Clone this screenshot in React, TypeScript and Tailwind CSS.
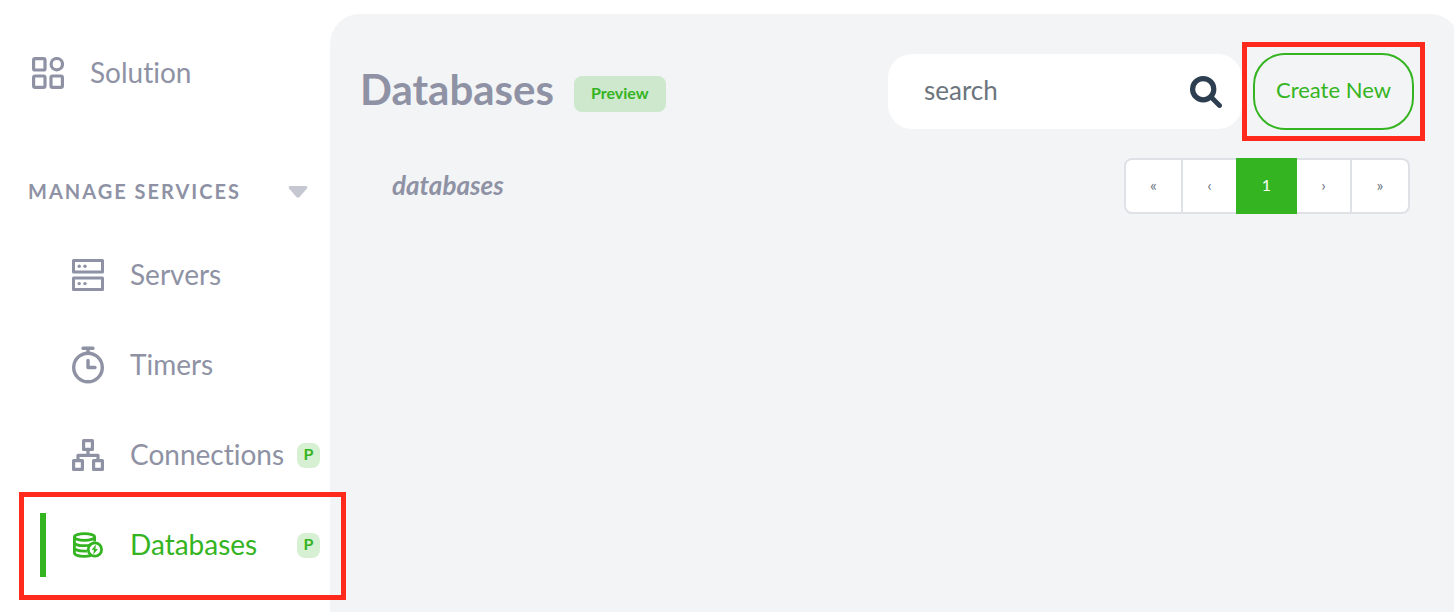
import type { ReactNode } from "react";

function SolutionIcon() {
  return (
    <svg viewBox="0 0 32 32" className="size-8" fill="none" stroke="currentColor" strokeWidth="3.2" aria-hidden="true">
      <rect x="1.6" y="1.6" width="11.4" height="11.4" rx="1.6" />
      <circle cx="24.8" cy="7.2" r="5.7" />
      <rect x="1.6" y="19" width="11.4" height="11.4" rx="1.6" />
      <rect x="19" y="19" width="11.4" height="11.4" rx="1.6" />
    </svg>
  );
}

function ServersIcon() {
  return (
    <svg viewBox="0 0 32 32" className="size-8" fill="none" stroke="currentColor" strokeWidth="3" strokeLinejoin="round" aria-hidden="true">
      <rect x="1.5" y="1.5" width="29" height="11.6" />
      <rect x="1.5" y="18.9" width="29" height="11.6" />
      <g fill="currentColor" stroke="none">
        <circle cx="7.2" cy="7.2" r="1.7" />
        <circle cx="13" cy="7.2" r="1.7" />
        <circle cx="7.2" cy="24.6" r="1.7" />
        <circle cx="13" cy="24.6" r="1.7" />
      </g>
    </svg>
  );
}

function TimersIcon() {
  return (
    <svg viewBox="0 0 32 38" className="h-[38px] w-8" fill="none" stroke="currentColor" strokeWidth="3.4" aria-hidden="true">
      <circle cx="16" cy="21.5" r="14.3" />
      <path d="M11 2.2h10M16 2.2v5M16 14.5v7h7" strokeLinecap="round" strokeLinejoin="round" />
    </svg>
  );
}

function ConnectionsIcon() {
  return (
    <svg viewBox="0 0 32 32" className="size-8" fill="none" stroke="currentColor" strokeWidth="3.2" strokeLinejoin="round" aria-hidden="true">
      <rect x="11.6" y="1.6" width="8.8" height="8.8" />
      <rect x="1.6" y="21.6" width="8.8" height="8.8" />
      <rect x="21.6" y="21.6" width="8.8" height="8.8" />
      <path d="M16 10.5v6M6 21.5v-5.2h20v5.2" />
    </svg>
  );
}

function DatabasesIcon() {
  return (
    <svg viewBox="0 0 32 32" className="size-8" fill="none" stroke="currentColor" strokeWidth="2.8" aria-hidden="true">
      <ellipse cx="12.5" cy="8" rx="10.1" ry="3.4" />
      <path d="M2.4 8v16c0 2 4.5 3.3 10.1 3.3 2.4 0 4.5-.3 6.2-.7M22.6 8v4.5" />
      <path d="M2.4 13.4c0 2 4.5 3.3 10.1 3.3 2.4 0 4.6-.3 6.4-1M2.4 18.8c0 2 4.5 3.3 10.1 3.3h2.4" />
      <circle cx="22.9" cy="20.5" r="6.7" />
      <path d="M24 15.6l-4.4 5.2h2.3l-.6 4.6 4.6-5.4h-2.5z" fill="currentColor" stroke="none" />
    </svg>
  );
}

function Highlight({ className }: { className: string }) {
  return <span className={`pointer-events-none absolute z-10 border-[5px] border-[#ff2a1c] ${className}`} />;
}

type ItemProps = { label: string; icon: ReactNode; preview?: boolean; active?: boolean };

function NavItem({ label, icon, preview, active }: ItemProps) {
  return (
    <li className="relative flex h-[90px] items-center pr-2.5 pl-10">
      <a
        href="#"
        aria-current={active ? "page" : undefined}
        className={`flex h-16 flex-1 items-center border-l-[6px] pl-[26px] ${
          active ? "border-[#35b422] text-[#35b422]" : "border-transparent"
        }`}
      >
        <span className="flex w-8 shrink-0 justify-center">{icon}</span>
        <span className="ml-[26px] pb-0.5">{label}</span>
        {preview && (
          <span className="ml-auto flex h-[25px] w-[23px] items-center justify-center rounded-lg bg-[#d7f0d3] pb-0.5 text-base font-bold text-[#35b422]">
            P
          </span>
        )}
      </a>
      {active && <Highlight className="-top-2 -right-4 -bottom-2.5 left-[19px]" />}
    </li>
  );
}

const pageCell =
  "flex h-14 items-center justify-center border-2 border-[#dee2e6] bg-white pb-0.5 text-base text-[#6c757d]";

export default function App() {
  return (
    <div className="flex h-screen overflow-hidden bg-white font-['Lato','Liberation_Sans',sans-serif] text-[#8e92a4] [font-variant-ligatures:none]">
      <nav aria-label="Main" className="w-[330px] shrink-0 pt-7 text-[28px] leading-9">
        <a href="#" className="flex h-[90px] items-center pl-8">
          <SolutionIcon />
          <span className="ml-[26px] pb-0.5">Solution</span>
        </a>
        <button
          type="button"
          aria-expanded="true"
          className="mt-9 flex h-19 w-full items-center justify-between pr-[22px] pl-7 text-xl font-bold tracking-widest"
        >
          <span className="pb-0.5">MANAGE SERVICES</span>
          <svg viewBox="0 0 20 12" className="h-3 w-5" fill="#c5c8d0" aria-hidden="true">
            <path d="M2 0h16q2 .6 1 2.4L11.6 11q-1.6 1.4-3.2 0L1 2.4Q0 .6 2 0z" />
          </svg>
        </button>
        <ul>
          <NavItem label="Servers" icon={<ServersIcon />} />
          <NavItem label="Timers" icon={<TimersIcon />} />
          <NavItem label="Connections" icon={<ConnectionsIcon />} preview />
          <NavItem label="Databases" icon={<DatabasesIcon />} preview active />
        </ul>
      </nav>

      <main className="mt-3.5 -mr-1.5 min-w-0 flex-1 rounded-t-[30px] bg-[#f3f4f6] pt-[39px] pr-[46px] pl-[30px]">
        <header className="flex items-center">
          <h1 className="pb-1.5 text-[42px] leading-[48px] font-bold">Databases</h1>
          <span className="mt-1 ml-5 flex h-9 items-center rounded-lg bg-[#cde8cd] px-[17px] pb-0.5 text-base font-bold text-[#35b422]">
            Preview
          </span>
          <form role="search" className="ml-auto flex h-[75px] w-[354px] items-center rounded-3xl bg-white pr-5 pl-9">
            <input
              type="text"
              placeholder="search"
              aria-label="Search databases"
              className="min-w-0 flex-1 pb-1 text-[26px] leading-8 text-[#6c757d] outline-none placeholder:text-[#6c757d]"
            />
            <button type="submit" aria-label="Search">
              <svg viewBox="0 0 32 32" className="size-8" fill="none" stroke="#2c3e50" aria-hidden="true">
                <circle cx="13.2" cy="13.2" r="10.6" strokeWidth="5.2" />
                <path d="M21.5 21.5l8 8" strokeWidth="4.8" strokeLinecap="round" />
              </svg>
            </button>
          </form>
          <div className="relative ml-[11px]">
            <button
              type="button"
              className="h-[77px] w-[161px] rounded-[32px] border-2 border-[#35b422] pb-1 text-[22px] text-[#35b422]"
            >
              Create New
            </button>
            <Highlight className="-inset-[11px]" />
          </div>
        </header>

        <div className="mt-7 flex items-center justify-between pr-1 pl-8">
          <h2 className="pb-0.5 text-[26px] leading-8 font-bold italic">databases</h2>
          <nav aria-label="Pagination" className="flex">
            <button type="button" aria-label="First page" className={`${pageCell} w-[59px] rounded-l-lg`}>
              «
            </button>
            <button type="button" aria-label="Previous page" className={`${pageCell} -ml-0.5 w-[57px]`}>
              ‹
            </button>
            <button
              type="button"
              aria-current="page"
              className="z-10 -ml-0.5 flex h-14 w-[61px] items-center justify-center bg-[#35b422] pb-0.5 text-base text-white"
            >
              1
            </button>
            <button type="button" aria-label="Next page" className={`${pageCell} -ml-0.5 w-[57px]`}>
              ›
            </button>
            <button type="button" aria-label="Last page" className={`${pageCell} -ml-0.5 w-[60px] rounded-r-lg`}>
              »
            </button>
          </nav>
        </div>
      </main>
    </div>
  );
}
